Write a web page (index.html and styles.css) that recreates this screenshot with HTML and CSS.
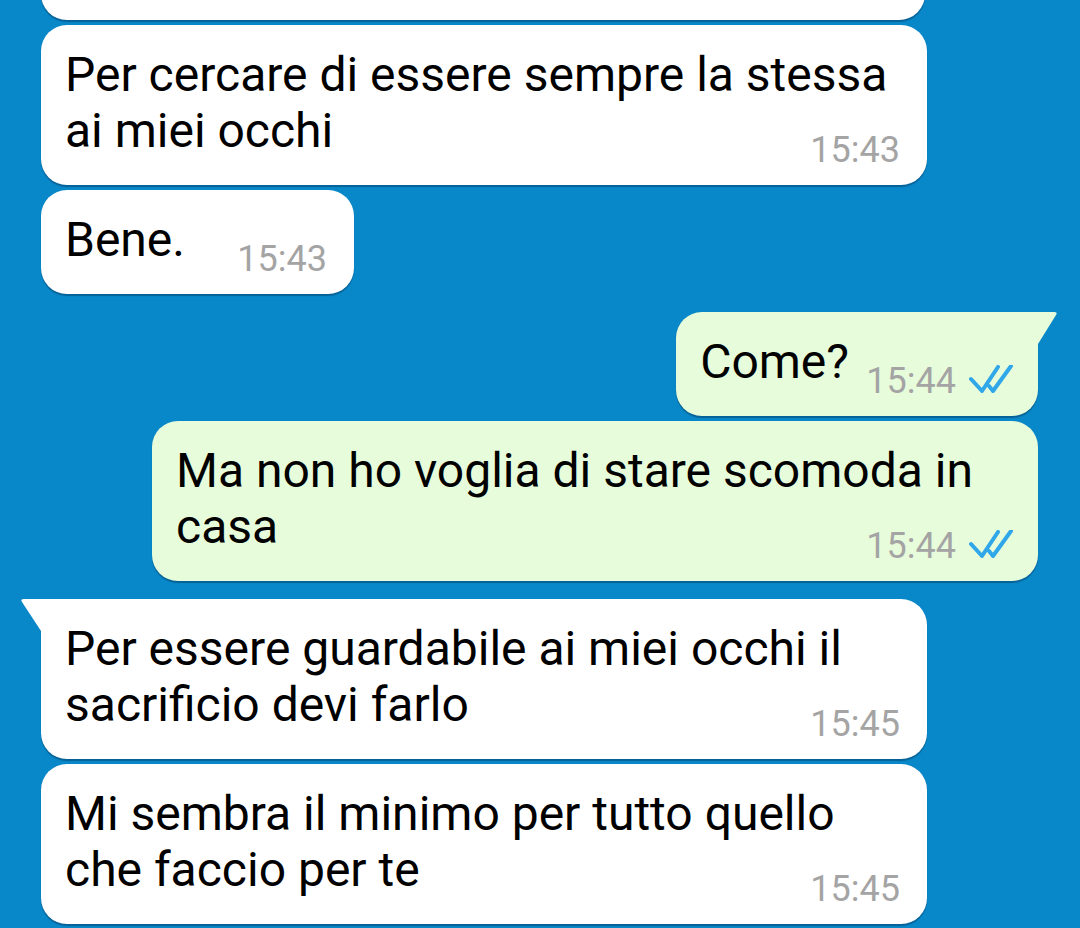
FILE: index.html
```html
<!DOCTYPE html>
<html lang="it">
<head>
<meta charset="utf-8">
<title>Chat</title>
<link rel="stylesheet" href="styles.css">
</head>
<body>
<div class="chat">
  <div class="msg in cut"></div>

  <div class="msg in">
    <p class="text">Per cercare di essere sempre la stessa ai miei occhi<span class="spacer"></span></p>
    <div class="meta"><span class="time">15:43</span></div>
  </div>

  <div class="msg in">
    <p class="text">Bene.<span class="spacer"></span></p>
    <div class="meta"><span class="time">15:43</span></div>
  </div>

  <div class="msg out first">
    <p class="text">Come?<span class="spacer"></span></p>
    <div class="meta"><span class="time">15:44</span>
      <svg class="tick" viewBox="0 0 44 28" aria-hidden="true"><path d="M2 14 L13 26 L29 2 M20 21 L24 26 L42 1"/></svg>
    </div>
  </div>

  <div class="msg out">
    <p class="text">Ma non ho voglia di stare scomoda in casa<span class="spacer"></span></p>
    <div class="meta"><span class="time">15:44</span>
      <svg class="tick" viewBox="0 0 44 28" aria-hidden="true"><path d="M2 14 L13 26 L29 2 M20 21 L24 26 L42 1"/></svg>
    </div>
  </div>

  <div class="msg in first">
    <p class="text">Per essere guardabile ai miei occhi il sacrificio devi farlo<span class="spacer"></span></p>
    <div class="meta"><span class="time">15:45</span></div>
  </div>

  <div class="msg in">
    <p class="text">Mi sembra il minimo per tutto quello che faccio per te<span class="spacer"></span></p>
    <div class="meta"><span class="time">15:45</span></div>
  </div>
</div>
</body>
</html>
```

FILE: styles.css
```css
html, body {
  margin: 0;
  padding: 0;
}

body {
  width: 1080px;
  height: 928px;
  overflow: hidden;
  background: #0988c9;
  font-family: Roboto, "Noto Sans", sans-serif;
}

.chat {
  display: flex;
  flex-direction: column;
  padding: 0 42px 0 41px;
}

.msg {
  position: relative;
  box-sizing: border-box;
  max-width: 886px;
  margin-top: 5px;
  padding: 22px 27px 18px 24px;
  border-radius: 26px;
  box-shadow: 0 1.5px 1px rgba(0, 30, 60, 0.35);
}

.in {
  align-self: flex-start;
  background: #ffffff;
}

.out {
  align-self: flex-end;
  background: #e7fcdb;
  padding-right: 25px;
}

.first {
  margin-top: 18px;
}

.in.first {
  border-top-left-radius: 0;
}

.out.first {
  border-top-right-radius: 0;
}

.in.first::before {
  content: "";
  position: absolute;
  left: -21px;
  top: 0;
  width: 21px;
  height: 32px;
  background: #ffffff;
  clip-path: path("M21 0 L4 0 Q0 0 2 3 L21 32 Z");
}

.out.first::before {
  content: "";
  position: absolute;
  right: -20px;
  top: 0;
  width: 20px;
  height: 32px;
  background: #e7fcdb;
  clip-path: path("M0 0 L16 0 Q20 0 18 3 L0 32 Z");
}

.cut {
  width: 884px;
  height: 100px;
  margin-top: -80px;
  padding: 0;
}

.text {
  margin: 0;
  font-size: 48px;
  line-height: 56px;
  color: #000000;
}

.spacer {
  display: inline-block;
  width: 142px;
  height: 1px;
}

.out .spacer {
  width: 164px;
}

.meta {
  display: flex;
  justify-content: flex-end;
  align-items: baseline;
  gap: 13px;
  height: 34px;
  margin-top: -26px;
  font-size: 36px;
  line-height: 34px;
  color: #a4a4a4;
}

.tick {
  width: 44px;
  height: 28px;
  fill: none;
  stroke: #2fa7e8;
  stroke-width: 4;
  stroke-linecap: round;
  stroke-linejoin: round;
}
```
